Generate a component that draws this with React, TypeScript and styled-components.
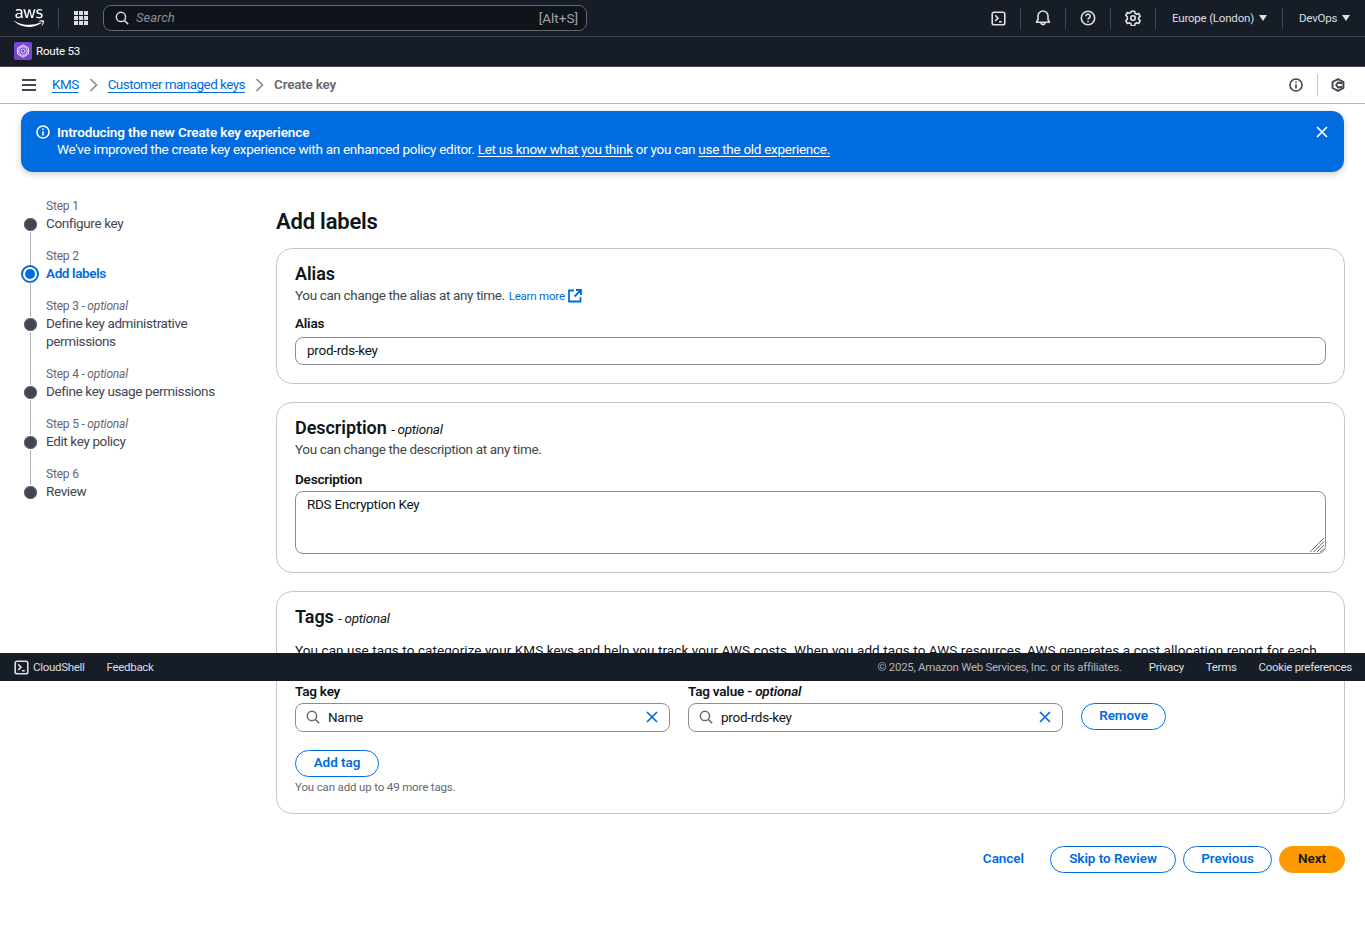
import React from "react";
import styled, { createGlobalStyle } from "styled-components";
import { FaAws } from "react-icons/fa";

const Global = createGlobalStyle`
  html, body { margin: 0; padding: 0; background: #fff; }
  body { font-family: Roboto, "Noto Sans", sans-serif; font-size: 13.5px; line-height: 20px; color: #0f141a; letter-spacing: -0.28px; }
  * { box-sizing: border-box; }
`;

const Page = styled.div`position: relative; width: 1365px; height: 936px; overflow: hidden; background: #fff;`;

const TopBar = styled.header`display: flex; align-items: center; height: 37px; background: #161d26; border-bottom: 1px solid #424650; padding-left: 14px; color: #fff;`;
const Logo = styled.div`width: 30px; height: 36px; display: flex; align-items: center; justify-content: center; color: #fff;`;
const Rule = styled.span`width: 1px; height: 21px; background: #424650; flex: none;`;
const LogoRule = styled(Rule)`margin-left: 14px;`;
const Waffle = styled.div`margin-left: 15px; margin-right: 15px; width: 14px; height: 14px; display: grid; grid-template-columns: repeat(3, 4px); grid-auto-rows: 4px; gap: 1px;`;
const WaffleDot = styled.i`background: #dedee3; display: block;`;
const SearchBox = styled.div`width: 484px; height: 26px; background: #0f141a; border: 1px solid #656871; border-radius: 8px; display: flex; align-items: center; padding: 0 8px 0 11px; gap: 7px; color: #dedee3;`;
const SearchHint = styled.span`font-style: italic; font-size: 13px; letter-spacing: 0; color: #8c8c94;`;
const SearchKey = styled.span`margin-left: auto; font-size: 13.5px; letter-spacing: 0; color: #a4a4ad;`;
const TopRight = styled.div`margin-left: auto; display: flex; align-items: center; height: 36px;`;
const TopIcon = styled.span`width: 44px; display: flex; justify-content: center; color: #dedee3;`;
const Menu = styled.span<{ $w: number }>`display: flex; align-items: center; font-size: 11.5px; letter-spacing: -0.2px; color: #dedee3; gap: 5px; padding-left: 16px; width: ${(p) => p.$w}px;`;
const Caret = styled.i`display: block; width: 0; height: 0; border-left: 4px solid transparent; border-right: 4px solid transparent; border-top: 6px solid #dedee3;`;

const ServiceBar = styled.div`height: 30px; background: #161d26; border-bottom: 1px solid #424650; display: flex; align-items: center; padding: 0 0 2px 14px; gap: 4px; color: #fff; font-size: 11.5px; letter-spacing: -0.2px;`;

const Crumbs = styled.nav`height: 37px; border-bottom: 1px solid #b4b4bb; display: flex; align-items: center; padding: 0 20px 1px 22px;`;
const Burger = styled.span`display: flex; color: #424650; margin-right: 16px;`;
const Crumb = styled.a`color: #006ce0; text-decoration: underline; text-underline-offset: 3px; letter-spacing: -0.55px; padding-bottom: 2px;`;
const CrumbSep = styled.span`display: flex; width: 29px; justify-content: center; color: #8c8c94;`;
const Current = styled.span`font-weight: 600; color: #656871; letter-spacing: -0.2px; padding-bottom: 2px;`;
const CrumbRight = styled.div`margin-left: auto; display: flex; align-items: center; color: #424650;`;
const CrumbRule = styled.span`width: 1px; height: 22px; background: #c6c6cd; margin: 0 13px 0 14px;`;

const Flash = styled.div`margin: 7px 21px 0; height: 61px; background: #006ce0; border-radius: 12px; box-shadow: 0 2px 6px rgba(15,20,26,.22); color: #fff; display: flex; padding: 12px 15px; gap: 7px; line-height: 18px;`;
const FlashIcon = styled.span`display: flex; height: 18px; align-items: center;`;
const FlashBody = styled.div`flex: 1;`;
const FlashTitle = styled.div`font-weight: 600; letter-spacing: -0.12px; margin-bottom: -1px;`;
const FlashLink = styled.a`color: #fff; text-decoration: underline; text-underline-offset: 2px;`;
const FlashClose = styled.span`display: flex; height: 18px; align-items: center; margin-right: 1px;`;

const Layout = styled.div`display: grid; grid-template-columns: 255px 1069px; padding-left: 21px; margin-top: 24px;`;
const Steps = styled.ol`list-style: none; margin: 0; padding: 1px 0 0;`;
const Step = styled.li<{ $last?: boolean }>`
  position: relative; display: grid; grid-template-columns: 25px 1fr; padding-bottom: 14px;
  &::after { content: ${(p) => (p.$last ? "none" : '""')}; position: absolute; left: 9px; top: 35px; bottom: -20px; width: 1px; background: #b4b4bb; }
`;
const StepLabel = styled.div`grid-column: 2; font-size: 12px; letter-spacing: -0.2px; line-height: 18px; color: #656871;`;
const StepTitle = styled.div<{ $active?: boolean }>`grid-column: 2; max-width: 180px; line-height: 18px; margin-top: -1px; margin-bottom: 1px; letter-spacing: -0.37px; color: ${(p) => (p.$active ? "#006ce0" : "#424650")}; font-weight: ${(p) => (p.$active ? 600 : 400)};`;
const MarkerCell = styled.div`grid-column: 1; grid-row: 2; display: flex; justify-content: center; width: 19px; padding-top: 3px;`;
const Dot = styled.span`display: block; width: 13px; height: 13px; border-radius: 50%; background: #424650; box-shadow: inset 0 0 0 1px #656871;`;
const ActiveDot = styled.span`display: block; width: 18px; height: 18px; margin: -3px 0 0 -1px; border-radius: 50%; border: 2px solid #006ce0; background: #fff; position: relative; &::before { content: ""; position: absolute; inset: 2px; border-radius: 50%; background: #006ce0; }`;
const Optional = styled.i``;

const Main = styled.main``;
const H1 = styled.h1`margin: 0; height: 52px; padding-top: 2px; font-size: 22px; line-height: 48px; font-weight: 600; letter-spacing: -0.2px;`;
const Card = styled.section`border: 1px solid #c6c6cd; border-radius: 16px; padding: 14px 18px 18px; margin-bottom: 18px;`;
const CardTitle = styled.h2`margin: 0; height: 22px; font-size: 18px; line-height: 22px; font-weight: 600; letter-spacing: -0.05px;`;
const CardOpt = styled.i`font-size: 13.5px; font-weight: 400; letter-spacing: -0.28px;`;
const Desc = styled.p`margin: 0; height: 20px; color: #424650; letter-spacing: -0.35px;`;
const TagDesc = styled(Desc)`margin-top: 12px; height: 40px; color: #0f141a; letter-spacing: 0.08px;`;
const Learn = styled.a`color: #006ce0; font-size: 11.5px; letter-spacing: -0.2px; margin-left: 1px; display: inline-flex; align-items: center; gap: 3px; vertical-align: top; padding-top: 1px;`;
const Label = styled.label<{ $gap: number }>`display: block; font-weight: 600; line-height: 18px; letter-spacing: -0.2px; margin-bottom: ${(p) => p.$gap}px;`;
const FieldBlock = styled.div<{ $top: number }>`margin-top: ${(p) => p.$top}px;`;
const Input = styled.div`height: 28px; border: 1px solid #8c8c94; border-radius: 8px; padding: 0 11px 2px; display: flex; align-items: center;`;
const Textarea = styled.div`position: relative; height: 63px; border: 1px solid #8c8c94; border-radius: 8px; padding: 2px 11px;`;
const Grip = styled.svg`position: absolute; right: 0; bottom: 0;`;
const TagRow = styled.div`display: flex; align-items: flex-start; margin-top: 2px; gap: 18px;`;
const TagCol = styled.div`width: 375px;`;
const TagInput = styled.div`height: 29px; border: 1px solid #8c8c94; border-radius: 8px; padding: 0 11px 1px 10px; display: flex; align-items: center; gap: 8px;`;
const TagClear = styled.span`margin-left: auto; color: #006ce0; display: flex;`;
const SearchGlyph = styled.span`display: flex; color: #656871;`;
const Btn = styled.button<{ $w: number }>`font: inherit; letter-spacing: -0.05px; font-weight: 600; width: ${(p) => p.$w}px; height: 27px; border: 1px solid #006ce0; border-radius: 20px; background: #fff; color: #006ce0; padding: 0 0 3px; display: flex; align-items: center; justify-content: center;`;
const RemoveSlot = styled.div`padding-top: 21px;`;
const AddBlock = styled.div`margin-top: 18px;`;
const Hint = styled.div`font-size: 11.5px; letter-spacing: -0.15px; line-height: 16px; color: #656871; margin-top: 2px;`;
const Actions = styled.div`display: flex; justify-content: flex-end; align-items: center; gap: 7px; margin-top: 32px;`;
const LinkBtn = styled.a`color: #006ce0; font-weight: 600; letter-spacing: -0.05px; margin-right: 19px; padding-bottom: 3px;`;
const Primary = styled(Btn)`background: #ff9900; border-color: #ff9900; color: #0f141a;`;

const Footer = styled.footer`position: absolute; left: 0; right: 0; top: 653px; height: 28px; background: #161d26; display: flex; align-items: center; padding: 0 13px 0 14px; color: #dedee3; font-size: 11.5px; letter-spacing: -0.3px;`;
const FootShell = styled.span`display: flex; align-items: center; gap: 4px; margin-right: 22px; color: #dedee3;`;
const Copy = styled.span`margin-left: auto; margin-right: 27px; color: #b4b4bb;`;
const FootLink = styled.span<{ $gap?: boolean }>`margin-left: ${(p) => (p.$gap ? 22 : 0)}px;`;

const Terminal = () => (
  <svg width="15" height="15" viewBox="0 0 16 16" fill="none" stroke="currentColor" strokeWidth="1.7">
    <rect x="1.3" y="1.3" width="13.4" height="13.4" rx="2" />
    <path d="M4.5 4.5 7.5 7.6 4.5 10.7M8.5 11.5h3" />
  </svg>
);
const Mag = ({ s = 14 }: { s?: number }) => (
  <svg width={s} height={s} viewBox="0 0 16 16" fill="none" stroke="currentColor" strokeWidth="1.7">
    <circle cx="6.8" cy="6.8" r="5.3" /><path d="m10.8 10.8 4.2 4.2" />
  </svg>
);
const Bell = () => (
  <svg width="16" height="16" viewBox="0 0 16 16" fill="none" stroke="currentColor" strokeWidth="1.6" strokeLinejoin="round">
    <path d="M1.5 12.2h13L13 9.5V6a5 5 0 0 0-10 0v3.5zM6 12.4a2 2 0 0 0 4 0" />
  </svg>
);
const Help = () => (
  <svg width="16" height="16" viewBox="0 0 16 16" fill="none" stroke="currentColor" strokeWidth="1.6">
    <circle cx="8" cy="8" r="6.7" /><path d="M5.9 6.2a2.1 2.1 0 1 1 3.2 1.8C8.4 8.5 8 8.8 8 9.6M8 10.8v1.4" />
  </svg>
);
const Gear = () => (
  <svg width="16" height="16" viewBox="0 0 16 16" fill="none" stroke="currentColor" strokeWidth="1.6" strokeLinejoin="round">
    <path d="M6.4 1.2h3.2l.4 2 1.7 1 2-.7 1.5 2.8-1.5 1.3v1.8l1.5 1.3-1.5 2.8-2-.7-1.7 1-.4 2H6.4l-.4-2-1.7-1-2 .7L.8 10.7l1.5-1.3V6.6L.8 5.3l1.5-2.8 2 .7 1.7-1z" />
    <circle cx="8" cy="8" r="2.3" />
  </svg>
);
const Info = ({ s = 14 }: { s?: number }) => (
  <svg width={s} height={s} viewBox="0 0 16 16" fill="none" stroke="currentColor" strokeWidth="1.8">
    <circle cx="8" cy="8" r="6.9" /><path d="M8 7v5M8 4v1.8" />
  </svg>
);
const Hex = () => (
  <svg width="14" height="14" viewBox="0 0 16 16" fill="none" stroke="currentColor" strokeWidth="2.2" strokeLinejoin="round">
    <path d="M8 1.2 14.2 4.6v6.8L8 14.8 1.8 11.4V4.6z" /><path d="M13 6 8 5.2 5.8 8 8 10.8l5-.8" />
  </svg>
);
const Chevron = () => (
  <svg width="9" height="14" viewBox="0 0 9 14" fill="none" stroke="currentColor" strokeWidth="1.7"><path d="m1.5 1 6 6-6 6" /></svg>
);
const Close = ({ s = 12 }: { s?: number }) => (
  <svg width={s} height={s} viewBox="0 0 12 12" fill="none" stroke="currentColor" strokeWidth="1.7"><path d="m1 1 10 10M11 1 1 11" /></svg>
);
const External = () => (
  <svg width="14" height="14" viewBox="0 0 14 14" fill="none" stroke="#006ce0" strokeWidth="1.8">
    <path d="M6 1.5H1v11h11.5V8M8 1h5v5M13 1 6.5 7.5" />
  </svg>
);
const Route53 = () => (
  <svg width="18" height="18" viewBox="0 0 18 18" fill="none">
    <defs><linearGradient id="r53" x1="0" y1="18" x2="18" y2="0"><stop stopColor="#4d27a8" /><stop offset="1" stopColor="#a166ff" /></linearGradient></defs>
    <rect width="18" height="18" rx="2" fill="url(#r53)" />
    <path d="M9 2.8 14.4 6v6L9 15.2 3.6 12V6z" stroke="#fff" strokeWidth=".9" />
    <circle cx="9" cy="9" r="4.2" stroke="#fff" strokeWidth=".9" />
    <circle cx="9" cy="9" r="2" stroke="#fff" strokeWidth=".8" />
  </svg>
);

const steps = [
  { label: "Step 1", title: "Configure key" },
  { label: "Step 2", title: "Add labels", active: true },
  { label: "Step 3", opt: true, title: "Define key administrative permissions" },
  { label: "Step 4", opt: true, title: "Define key usage permissions" },
  { label: "Step 5", opt: true, title: "Edit key policy" },
  { label: "Step 6", title: "Review" },
];

export default function App() {
  return (
    <Page>
      <Global />
      <TopBar>
        <Logo><FaAws size={30} /></Logo>
        <LogoRule />
        <Waffle>{Array.from({ length: 9 }, (_, i) => <WaffleDot key={i} />)}</Waffle>
        <SearchBox>
          <Mag />
          <SearchHint>Search</SearchHint>
          <SearchKey>[Alt+S]</SearchKey>
        </SearchBox>
        <TopRight>
          <TopIcon><Terminal /></TopIcon><Rule />
          <TopIcon><Bell /></TopIcon><Rule />
          <TopIcon><Help /></TopIcon><Rule />
          <TopIcon><Gear /></TopIcon><Rule />
          <Menu $w={126}>Europe (London) <Caret /></Menu><Rule />
          <Menu $w={82}>DevOps <Caret /></Menu>
        </TopRight>
      </TopBar>
      <ServiceBar><Route53 />Route 53</ServiceBar>
      <Crumbs>
        <Burger>
          <svg width="14" height="12" viewBox="0 0 14 12" stroke="currentColor" strokeWidth="2"><path d="M0 1h14M0 6h14M0 11h14" /></svg>
        </Burger>
        <Crumb>KMS</Crumb>
        <CrumbSep><Chevron /></CrumbSep>
        <Crumb>Customer managed keys</Crumb>
        <CrumbSep><Chevron /></CrumbSep>
        <Current>Create key</Current>
        <CrumbRight><Info /><CrumbRule /><Hex /></CrumbRight>
      </Crumbs>
      <Flash>
        <FlashIcon><Info /></FlashIcon>
        <FlashBody>
          <FlashTitle>Introducing the new Create key experience</FlashTitle>
          We've improved the create key experience with an enhanced policy editor. <FlashLink>Let us know what you think</FlashLink> or you can <FlashLink>use the old experience.</FlashLink>
        </FlashBody>
        <FlashClose><Close /></FlashClose>
      </Flash>
      <Layout>
        <Steps>
          {steps.map((s, i) => (
            <Step key={s.label} $last={i === steps.length - 1}>
              <StepLabel>{s.label}{s.opt && <> - <Optional>optional</Optional></>}</StepLabel>
              <MarkerCell>{s.active ? <ActiveDot /> : <Dot />}</MarkerCell>
              <StepTitle $active={s.active}>{s.title}</StepTitle>
            </Step>
          ))}
        </Steps>
        <Main>
          <H1>Add labels</H1>
          <Card>
            <CardTitle>Alias</CardTitle>
            <Desc>You can change the alias at any time. <Learn>Learn more <External /></Learn></Desc>
            <FieldBlock $top={9}>
              <Label $gap={5}>Alias</Label>
              <Input>prod-rds-key</Input>
            </FieldBlock>
          </Card>
          <Card>
            <CardTitle>Description <CardOpt>- optional</CardOpt></CardTitle>
            <Desc>You can change the description at any time.</Desc>
            <FieldBlock $top={11}>
              <Label $gap={3}>Description</Label>
              <Textarea>
                RDS Encryption Key
                <Grip width="16" height="16" viewBox="0 0 16 16" stroke="#656871" strokeWidth="1"><path d="M1 15 15 1M4.500 15 15 4.500M8 15l7-7M11.500 15l3.500-3.500" /></Grip>
              </Textarea>
            </FieldBlock>
          </Card>
          <Card>
            <CardTitle>Tags <CardOpt>- optional</CardOpt></CardTitle>
            <TagDesc>You can use tags to categorize your KMS keys and help you track your AWS costs. When you add tags to AWS resources, AWS generates a cost allocation report for each tag key and value.</TagDesc>
            <TagRow>
              <TagCol>
                <Label $gap={3}>Tag key</Label>
                <TagInput><SearchGlyph><Mag s={14} /></SearchGlyph>Name<TagClear><Close /></TagClear></TagInput>
              </TagCol>
              <TagCol>
                <Label $gap={3}>Tag value - <Optional>optional</Optional></Label>
                <TagInput><SearchGlyph><Mag s={14} /></SearchGlyph>prod-rds-key<TagClear><Close /></TagClear></TagInput>
              </TagCol>
              <RemoveSlot><Btn $w={85}>Remove</Btn></RemoveSlot>
            </TagRow>
            <AddBlock>
              <Btn $w={84}>Add tag</Btn>
              <Hint>You can add up to 49 more tags.</Hint>
            </AddBlock>
          </Card>
          <Actions>
            <LinkBtn>Cancel</LinkBtn>
            <Btn $w={126}>Skip to Review</Btn>
            <Btn $w={89}>Previous</Btn>
            <Primary $w={66}>Next</Primary>
          </Actions>
        </Main>
      </Layout>
      <Footer>
        <FootShell><Terminal />CloudShell</FootShell>
        <span>Feedback</span>
        <Copy>© 2025, Amazon Web Services, Inc. or its affiliates.</Copy>
        <FootLink>Privacy</FootLink>
        <FootLink $gap>Terms</FootLink>
        <FootLink $gap>Cookie preferences</FootLink>
      </Footer>
    </Page>
  );
}
